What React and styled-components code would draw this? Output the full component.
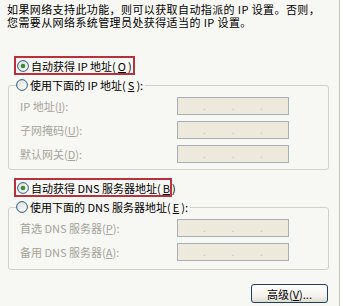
import React from "react";
import styled, { createGlobalStyle } from "styled-components";

const GlobalStyle = createGlobalStyle`
  body {
    margin: 0;
    background: #ffffff;
  }
`;

const Page = styled.div`
  width: 340px;
  height: 306px;
  box-sizing: border-box;
  border-right: 1px solid #c4c3ba;
  background: #f7f7f3;
  font-family: "Noto Sans CJK SC", "Liberation Sans", sans-serif;
  font-size: 11px;
  color: #000;
  display: flex;
  flex-direction: column;
  overflow: hidden;
`;

const Intro = styled.p`
  margin: 3px 0 0 7px;
  line-height: 13px;
  letter-spacing: 0.4px;
  white-space: nowrap;
`;

const Highlight = styled.div`
  align-self: flex-start;
  margin: ${p => p.$top}px 0 0 14px;
  width: ${p => p.$width}px;
  height: 19px;
  box-sizing: border-box;
  border: 2px solid #b8313c;
  display: flex;
  align-items: center;
  padding-left: 1px;
`;

const Option = styled.label`
  display: flex;
  align-items: center;
  gap: 2px;
  height: 14px;
  line-height: 14px;
  white-space: nowrap;
`;

const Group = styled.fieldset`
  margin: 3px 0 0 8px;
  width: 321px;
  box-sizing: border-box;
  border: 1px solid #d3d1c5;
  border-radius: 3px;
  padding: 5px 0 ${p => p.$bottom}px 0;
  min-width: 0;
`;

const Caption = styled.legend`
  padding: 0 2px 0 0;
  margin-left: 7px;
`;

const Rows = styled.div`
  margin-left: 11px;
  display: grid;
  grid-template-columns: 157px 112px;
  row-gap: 6px;
`;

const FieldLabel = styled.span`
  color: #a5a49b;
  line-height: 18px;
  white-space: nowrap;
`;

const IpBox = styled.div`
  height: 18px;
  box-sizing: border-box;
  border: 1px solid #a9b1b8;
  background: #ede9dd;
  display: flex;
  align-items: center;
`;

const Octet = styled.span`
  flex: 1;
`;

const Dot = styled.span`
  width: 4px;
  color: #c6c2b4;
  font-size: 10px;
  line-height: 10px;
  text-align: center;
`;

const Footer = styled.div`
  display: flex;
  justify-content: flex-end;
  margin: 14px 11px 0 0;
`;

const Button = styled.button`
  width: 77px;
  height: 19px;
  box-sizing: border-box;
  border: 1px solid #1f3f66;
  border-radius: 3px;
  background: linear-gradient(#ffffff, #f2f1ea 70%, #dedbd0);
  font-family: inherit;
  font-size: 11px;
  color: #000;
  padding: 0;
  line-height: 16px;
`;

function Radio({ checked }) {
  return (
    <svg width="12" height="12" viewBox="0 0 12 12">
      <defs>
        <linearGradient id="rb" x1="0" y1="0" x2="1" y2="1">
          <stop offset="0" stopColor="#dcdcd6" />
          <stop offset="1" stopColor="#ffffff" />
        </linearGradient>
      </defs>
      <circle cx="6" cy="6" r="5.4" fill="url(#rb)" stroke="#2b5d8c" strokeWidth="1" />
      {checked && <circle cx="6" cy="6" r="2.3" fill="#3a8f32" />}
    </svg>
  );
}

function IpField() {
  return (
    <IpBox>
      <Octet />
      <Dot>.</Dot>
      <Octet />
      <Dot>.</Dot>
      <Octet />
      <Dot>.</Dot>
      <Octet />
    </IpBox>
  );
}

const ipRows = [
  ["IP 地址", "I"],
  ["子网掩码", "U"],
  ["默认网关", "D"],
];

const dnsRows = [
  ["首选 DNS 服务器", "P"],
  ["备用 DNS 服务器", "A"],
];

function FieldRows({ rows }) {
  return (
    <Rows>
      {rows.map(([name, key]) => (
        <React.Fragment key={key}>
          <FieldLabel>
            {name}(<u>{key}</u>):
          </FieldLabel>
          <IpField />
        </React.Fragment>
      ))}
    </Rows>
  );
}

export default function App() {
  return (
    <Page>
      <GlobalStyle />
      <Intro>
        如果网络支持此功能，则可以获取自动指派的 IP 设置。否则，
        <br />
        您需要从网络系统管理员处获得适当的 IP 设置。
      </Intro>

      <Highlight $top={27} $width={121}>
        <Option>
          <Radio checked />
          自动获得 IP 地址(<u>O</u>)
        </Option>
      </Highlight>

      <Group $bottom={6}>
        <Caption>
          <Option>
            <Radio />
            使用下面的 IP 地址(<u>S</u>):
          </Option>
        </Caption>
        <FieldRows rows={ipRows} />
      </Group>

      <Highlight $top={8} $width={158}>
        <Option>
          <Radio checked />
          自动获得 DNS 服务器地址(<u>B</u>)
        </Option>
      </Highlight>

      <Group $bottom={8}>
        <Caption>
          <Option>
            <Radio />
            使用下面的 DNS 服务器地址(<u>E</u>):
          </Option>
        </Caption>
        <FieldRows rows={dnsRows} />
      </Group>

      <Footer>
        <Button>
          高级(<u>V</u>)...
        </Button>
      </Footer>
    </Page>
  );
}
